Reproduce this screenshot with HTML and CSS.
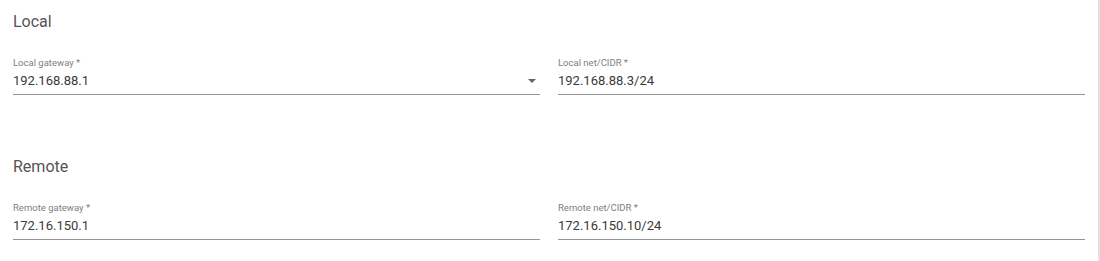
FILE: index.html
```html
<!DOCTYPE html>
<html lang="en">
<head>
    <meta charset="UTF-8">
    <title>Tunnel settings</title>
    <link rel="stylesheet" href="styles.css">
</head>
<body>
    <div class="panel">
        <section class="group">
            <h2>Local</h2>
            <div class="row">
                <div class="field select">
                    <label>Local gateway *</label>
                    <div class="value">192.168.88.1<span class="arrow"></span></div>
                </div>
                <div class="field">
                    <label>Local net/CIDR *</label>
                    <div class="value">192.168.88.3/24</div>
                </div>
            </div>
        </section>
        <section class="group">
            <h2>Remote</h2>
            <div class="row">
                <div class="field">
                    <label>Remote gateway *</label>
                    <div class="value">172.16.150.1</div>
                </div>
                <div class="field">
                    <label>Remote net/CIDR *</label>
                    <div class="value">172.16.150.10/24</div>
                </div>
            </div>
        </section>
    </div>
</body>
</html>
```

FILE: styles.css
```css
html, body {
    margin: 0;
    padding: 0;
    background-color: #fff;
}
body {
    font-family: Roboto, 'Liberation Sans', sans-serif;
}
.panel {
    width: 1100px;
    height: 261px;
    box-sizing: border-box;
    border-right: 2px solid #e2e2e2;
    padding: 12px 0 0 13px;
}
.group {
    margin-bottom: 62px;
}
.group h2 {
    margin: 0 0 25px;
    font-size: 16px;
    line-height: 20px;
    font-weight: 400;
    color: #555;
}
.row {
    display: grid;
    grid-template-columns: 527px 527px;
    gap: 18px;
}
.field label {
    display: block;
    font-size: 9.5px;
    line-height: 12px;
    color: #808080;
    margin-bottom: 3px;
}
.field .value {
    position: relative;
    font-size: 13px;
    line-height: 18px;
    color: #3a3a3a;
    padding-bottom: 4px;
    border-bottom: 1px solid #949494;
}
.field .arrow {
    position: absolute;
    right: 4px;
    top: 7px;
    width: 0;
    height: 0;
    border-left: 4px solid transparent;
    border-right: 4px solid transparent;
    border-top: 4px solid #666;
}
```
